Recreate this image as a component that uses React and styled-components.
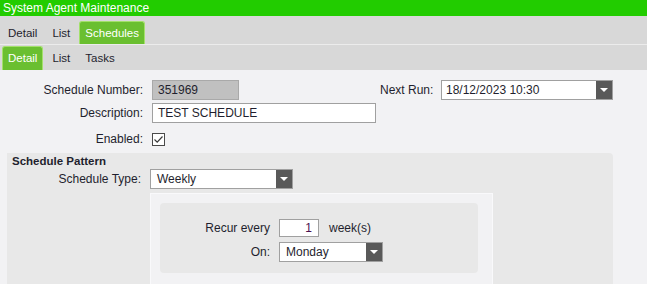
import React from 'react'
import styled, { createGlobalStyle } from 'styled-components'

const Global = createGlobalStyle`
  body {
    margin: 0;
    background: #f2f2f4;
    font-family: "Liberation Sans", Arial, sans-serif;
    font-size: 12px;
    color: #1f1f2e;
  }
`

const Page = styled.div`
  width: 647px;
  height: 284px;
  overflow: hidden;
  background: #f2f2f4;
`

const TitleBar = styled.div`
  height: 16px;
  line-height: 16px;
  padding-left: 3px;
  background: #22cc00;
  color: #ffffff;
  font-size: 12px;
`

const TabRow = styled.div`
  display: flex;
  align-items: flex-end;
  height: ${p => p.$h}px;
  padding-left: 2px;
  background: #d8d8d8;
  border-bottom: ${p => (p.$line ? '1px solid #ececec' : 'none')};
`

const Tab = styled.div`
  height: ${p => p.$h}px;
  line-height: ${p => p.$h}px;
  padding: 0 5px;
  margin-right: 3px;
  font-size: 11.5px;
  border: 1px solid ${p => (p.$active ? '#a3e06b' : 'transparent')};
  border-bottom: none;
  border-radius: 3px 3px 0 0;
  background: ${p => (p.$active ? '#6abf30' : 'transparent')};
  color: ${p => (p.$active ? '#ffffff' : '#1f1f2e')};
`

const Content = styled.div`
  padding-top: 10px;
`

const FormRow = styled.div`
  display: flex;
  align-items: center;
  height: 20px;
  margin-top: ${p => p.$mt || 0}px;
  padding-right: ${p => p.$pr || 0}px;
`

const Label = styled.div`
  width: ${p => p.$w}px;
  margin-right: 9px;
  text-align: right;
  white-space: nowrap;
`

const Field = styled.div`
  position: relative;
  box-sizing: border-box;
  width: ${p => p.$w}px;
  height: ${p => p.$h || 20}px;
  line-height: ${p => (p.$h || 20) - 2}px;
  padding: 0 ${p => (p.$right ? '6px' : '0')} 0 ${p => p.$pl || 5}px;
  border: 1px solid ${p => (p.$grey ? '#a9a9a9' : '#a0a0a0')};
  background: ${p => (p.$grey ? '#c0c0c0' : '#ffffff')};
  text-align: ${p => (p.$right ? 'right' : 'left')};
  color: ${p => p.$color || '#1f1f2e'};
  white-space: nowrap;
`

const DropButton = styled.div`
  position: absolute;
  top: 0;
  right: 0;
  bottom: 0;
  width: 16px;
  background: #595959;
  display: flex;
  align-items: center;
  justify-content: center;
`

const Arrow = styled.div`
  width: 0;
  height: 0;
  border-left: 4px solid transparent;
  border-right: 4px solid transparent;
  border-top: 4px solid #ffffff;
`

const NextRun = styled.div`
  display: flex;
  align-items: center;
  margin-left: auto;
`

const Check = styled.div`
  box-sizing: border-box;
  width: 13px;
  height: 13px;
  border: 1px solid #4a4a4a;
  background: #ffffff;
  display: flex;
  align-items: center;
  justify-content: center;
`

const Panel = styled.div`
  margin: 4px 34px 0 7px;
  height: 140px;
  padding: 2px 0 0 5px;
  background: #e8e8e8;
  border-top-right-radius: 4px;
`

const PanelTitle = styled.div`
  font-weight: bold;
  font-size: 11.5px;
  line-height: 13px;
  margin-bottom: 1px;
`

const SubBox = styled.div`
  box-sizing: border-box;
  margin: 4px 0 0 138px;
  width: 343px;
  height: 100px;
  padding: 9px 14px 0 9px;
  background: #f2f2f4;
  border: 1px solid #f9f9fb;
`

const InnerPanel = styled.div`
  height: 70px;
  padding-top: 15px;
  box-sizing: border-box;
  background: #e8e8e8;
  border-radius: 4px;
`

const Unit = styled.span`
  margin-left: 10px;
`

function Dropdown({ w, h, pl, children }) {
  return (
    <Field $w={w} $h={h} $pl={pl}>
      {children}
      <DropButton>
        <Arrow />
      </DropButton>
    </Field>
  )
}

export default function App() {
  return (
    <Page>
      <Global />
      <TitleBar>System Agent Maintenance</TitleBar>
      <TabRow $h={28} $line>
        <Tab $h={22}>Detail</Tab>
        <Tab $h={22}>List</Tab>
        <Tab $h={22} $active>Schedules</Tab>
      </TabRow>
      <TabRow $h={25}>
        <Tab $h={23} $active>Detail</Tab>
        <Tab $h={23}>List</Tab>
        <Tab $h={23}>Tasks</Tab>
      </TabRow>
      <Content>
        <FormRow $pr={34}>
          <Label $w={143}>Schedule Number:</Label>
          <Field $w={87} $grey>351969</Field>
          <NextRun>
            <Label $w={52}>Next Run:</Label>
            <Dropdown w={172} pl={4}>18/12/2023 10:30</Dropdown>
          </NextRun>
        </FormRow>
        <FormRow $mt={3}>
          <Label $w={143}>Description:</Label>
          <Field $w={224}>TEST SCHEDULE</Field>
        </FormRow>
        <FormRow $mt={6}>
          <Label $w={143}>Enabled:</Label>
          <Check>
            <svg width="11" height="11" viewBox="0 0 11 11">
              <path d="M1.5 5.5 L4.2 8.2 L9.5 2.5" fill="none" stroke="#3a3a3a" strokeWidth="1.2" />
            </svg>
          </Check>
        </FormRow>
        <Panel>
          <PanelTitle>Schedule Pattern</PanelTitle>
          <FormRow>
            <Label $w={129}>Schedule Type:</Label>
            <Dropdown w={143} pl={6}>Weekly</Dropdown>
          </FormRow>
          <SubBox>
            <InnerPanel>
              <FormRow $h={18}>
                <Label $w={110}>Recur every</Label>
                <Field $w={40} $h={18} $right $color="#4a1050">1</Field>
                <Unit>week(s)</Unit>
              </FormRow>
              <FormRow $mt={4}>
                <Label $w={110}>On:</Label>
                <Dropdown w={104} pl={6}>Monday</Dropdown>
              </FormRow>
            </InnerPanel>
          </SubBox>
        </Panel>
      </Content>
    </Page>
  )
}
